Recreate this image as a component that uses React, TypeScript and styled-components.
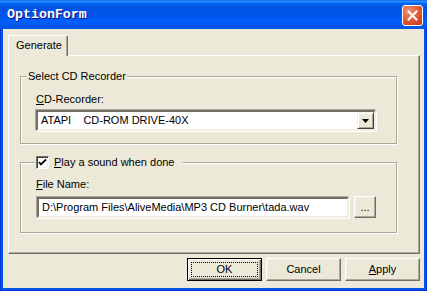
import React from 'react';
import styled, { createGlobalStyle } from 'styled-components';

const GlobalStyle = createGlobalStyle`
  html, body { margin: 0; padding: 0; background: #fff; }
  body {
    font-family: "Liberation Sans", Arial, sans-serif;
    font-size: 11px;
    color: #000;
  }
  * { box-sizing: border-box; }
`;

const Window = styled.div`
  width: 427px;
  height: 291px;
  display: flex;
  flex-direction: column;
  background: #0055ea;
  box-shadow: inset 1px 0 #0831d9, inset -1px 0 #0831d9, inset 0 -1px #0831d9;
`;

const TitleBar = styled.div`
  height: 29px;
  flex: none;
  display: flex;
  align-items: center;
  justify-content: space-between;
  padding: 0 4px 0 7px;
  background: linear-gradient(
    to bottom,
    #0058ee 0%,
    #3593ff 4%,
    #288eff 6%,
    #127dff 8%,
    #036ffc 10%,
    #0262ee 14%,
    #0057e5 20%,
    #0054e3 24%,
    #0055eb 56%,
    #005bf5 66%,
    #0260f8 76%,
    #0058ec 86%,
    #0055e6 100%
  );
`;

const Title = styled.span`
  font-family: "Liberation Mono", "DejaVu Sans Mono", monospace;
  font-weight: bold;
  font-size: 13.3px;
  color: #fff;
  text-shadow: 1px 1px #0f1089;
  letter-spacing: 0;
`;

const CloseButton = styled.div`
  width: 21px;
  height: 21px;
  margin-top: 2px;
  border: 1px solid #fff;
  border-radius: 3px;
  display: flex;
  align-items: center;
  justify-content: center;
  background: radial-gradient(circle at 30% 25%, #f0906c 0%, #e26540 40%, #d4431c 80%, #c53a14 100%);
`;

const Client = styled.div`
  flex: 1;
  margin: 0 3px 3px;
  background: #ece9d8;
  display: flex;
  flex-direction: column;
  padding: 6px 4px 7px 5px;
`;

const TabStrip = styled.div`
  height: 20px;
  display: flex;
  align-items: flex-start;
`;

const Tab = styled.div`
  position: relative;
  z-index: 1;
  height: 21px;
  width: 60px;
  padding: 3px 0 0 7px;
  background: #ece9d8;
  border: 1px solid;
  border-bottom: none;
  border-color: #fff #716f64 transparent #fff;
  border-radius: 2px 2px 0 0;
  box-shadow: inset -1px 0 #aca899;
  line-height: 13px;
`;

const Panel = styled.div`
  height: 199px;
  border: 1px solid;
  border-color: #fff #716f64 #716f64 #fff;
  box-shadow: inset -1px -1px #aca899;
  padding: 14px 0 0 11px;
  display: flex;
  flex-direction: column;
`;

const Group = styled.fieldset<{ $gap?: number }>`
  width: 377px;
  margin: ${p => p.$gap ?? 0}px 0 0 0;
  padding: 0;
  min-inline-size: 0;
  border: 1px solid #aca899;
  box-shadow: 1px 1px 0 #fff, inset 1px 1px 0 #fff;
`;

const Legend = styled.legend<{ $indent: number }>`
  margin-left: ${p => p.$indent}px;
  padding: 0 1px;
  background: #ece9d8;
  line-height: 13px;
`;

const CheckLegend = styled.legend`
  margin-left: 14px;
  padding: 0 8px 0 1px;
  height: 15px;
  background: #ece9d8;
  display: flex;
  align-items: center;
  gap: 5px;
  line-height: 13px;
`;

const CheckBox = styled.span`
  width: 13px;
  height: 13px;
  display: block;
  background: #fff;
  border: 1px solid;
  border-color: #716f64 #fff #fff #716f64;
  box-shadow: inset 1px 1px #404040, inset -1px -1px #f1efe2;
`;

const GroupBody = styled.div<{ $top: number; $bottom: number }>`
  padding: ${p => p.$top}px 15px ${p => p.$bottom}px;
  display: flex;
  flex-direction: column;
`;

const Label = styled.div`
  line-height: 13px;
  height: 13px;
`;

const Sunken = styled.div`
  height: 21px;
  background: #fff;
  border: 2px solid;
  border-color: #716f64 #f1efe2 #f1efe2 #716f64;
  box-shadow: -1px -1px 0 #aca899, 1px 1px 0 #fff;
  display: flex;
  align-items: center;
`;

const Combo = styled(Sunken)`
  width: 340px;
  margin-top: 4px;
  padding-left: 3px;
  justify-content: space-between;
`;

const ComboText = styled.span`
  white-space: pre;
  line-height: 13px;
`;

const DropButton = styled.div`
  width: 17px;
  height: 17px;
  background: #ece9d8;
  border: 1px solid;
  border-color: #f1efe2 #404040 #404040 #f1efe2;
  box-shadow: inset 1px 1px #fff, inset -1px -1px #aca899;
  display: flex;
  align-items: center;
  justify-content: center;
`;

const FileRow = styled.div`
  margin-top: 5px;
  height: 22px;
  display: flex;
  align-items: center;
  gap: 5px;
`;

const TextBox = styled(Sunken)`
  width: 312px;
  margin-left: 1px;
  padding-left: 3px;
  white-space: pre;
  overflow: hidden;
`;

const Buttons = styled.div`
  margin-top: 4px;
  display: flex;
  justify-content: flex-end;
  gap: 4px;
`;

const Button = styled.div<{ $w: number; $h: number; $default?: boolean }>`
  width: ${p => p.$w}px;
  height: ${p => p.$h}px;
  display: flex;
  align-items: center;
  justify-content: center;
  background: #ece9d8;
  border: 1px solid;
  border-color: ${p => (p.$default ? '#000' : '#fff #716f64 #716f64 #fff')};
  box-shadow: ${p =>
    p.$default
      ? 'inset 1px 1px #fff, inset -1px -1px #716f64, inset -2px -2px #aca899'
      : 'inset -1px -1px #aca899, inset 1px 1px #f1efe2'};
  line-height: 13px;
`;

const FocusRing = styled.span`
  flex: 1;
  align-self: stretch;
  margin: 3px;
  border: 1px dotted #000;
  display: flex;
  align-items: center;
  justify-content: center;
`;

export default function App() {
  return (
    <>
      <GlobalStyle />
      <Window>
        <TitleBar>
          <Title>OptionForm</Title>
          <CloseButton>
            <svg width="11" height="11" viewBox="0 0 11 11">
              <path d="M1.5 1.5 L9.5 9.5 M9.5 1.5 L1.5 9.5" stroke="#fff" strokeWidth="2" strokeLinecap="square" />
            </svg>
          </CloseButton>
        </TitleBar>
        <Client>
          <TabStrip>
            <Tab>Generate</Tab>
          </TabStrip>
          <Panel>
            <Group>
              <Legend $indent={6}>Select CD Recorder</Legend>
              <GroupBody $top={10} $bottom={12}>
                <Label><u>C</u>D-Recorder:</Label>
                <Combo>
                  <ComboText>{'ATAPI    CD-ROM DRIVE-40X'}</ComboText>
                  <DropButton>
                    <svg width="7" height="4" viewBox="0 0 7 4">
                      <polygon points="0,0 7,0 3.5,4" fill="#000" />
                    </svg>
                  </DropButton>
                </Combo>
              </GroupBody>
            </Group>
            <Group $gap={11}>
              <CheckLegend>
                <CheckBox>
                  <svg width="11" height="11" viewBox="0 0 11 11" style={{ display: 'block' }}>
                    <polyline points="2,5 4,7.5 9,2.5" fill="none" stroke="#000" strokeWidth="1.8" />
                  </svg>
                </CheckBox>
                <span><u>P</u>lay a sound when done</span>
              </CheckLegend>
              <GroupBody $top={8} $bottom={14}>
                <Label><u>F</u>ile Name:</Label>
                <FileRow>
                  <TextBox>{'D:\\Program Files\\AliveMedia\\MP3 CD Burner\\tada.wav'}</TextBox>
                  <Button $w={22} $h={22}>...</Button>
                </FileRow>
              </GroupBody>
            </Group>
          </Panel>
          <Buttons>
            <Button $w={75} $h={23} $default>
              <FocusRing>OK</FocusRing>
            </Button>
            <Button $w={75} $h={23}>Cancel</Button>
            <Button $w={75} $h={23}><span><u>A</u>pply</span></Button>
          </Buttons>
        </Client>
      </Window>
    </>
  );
}
